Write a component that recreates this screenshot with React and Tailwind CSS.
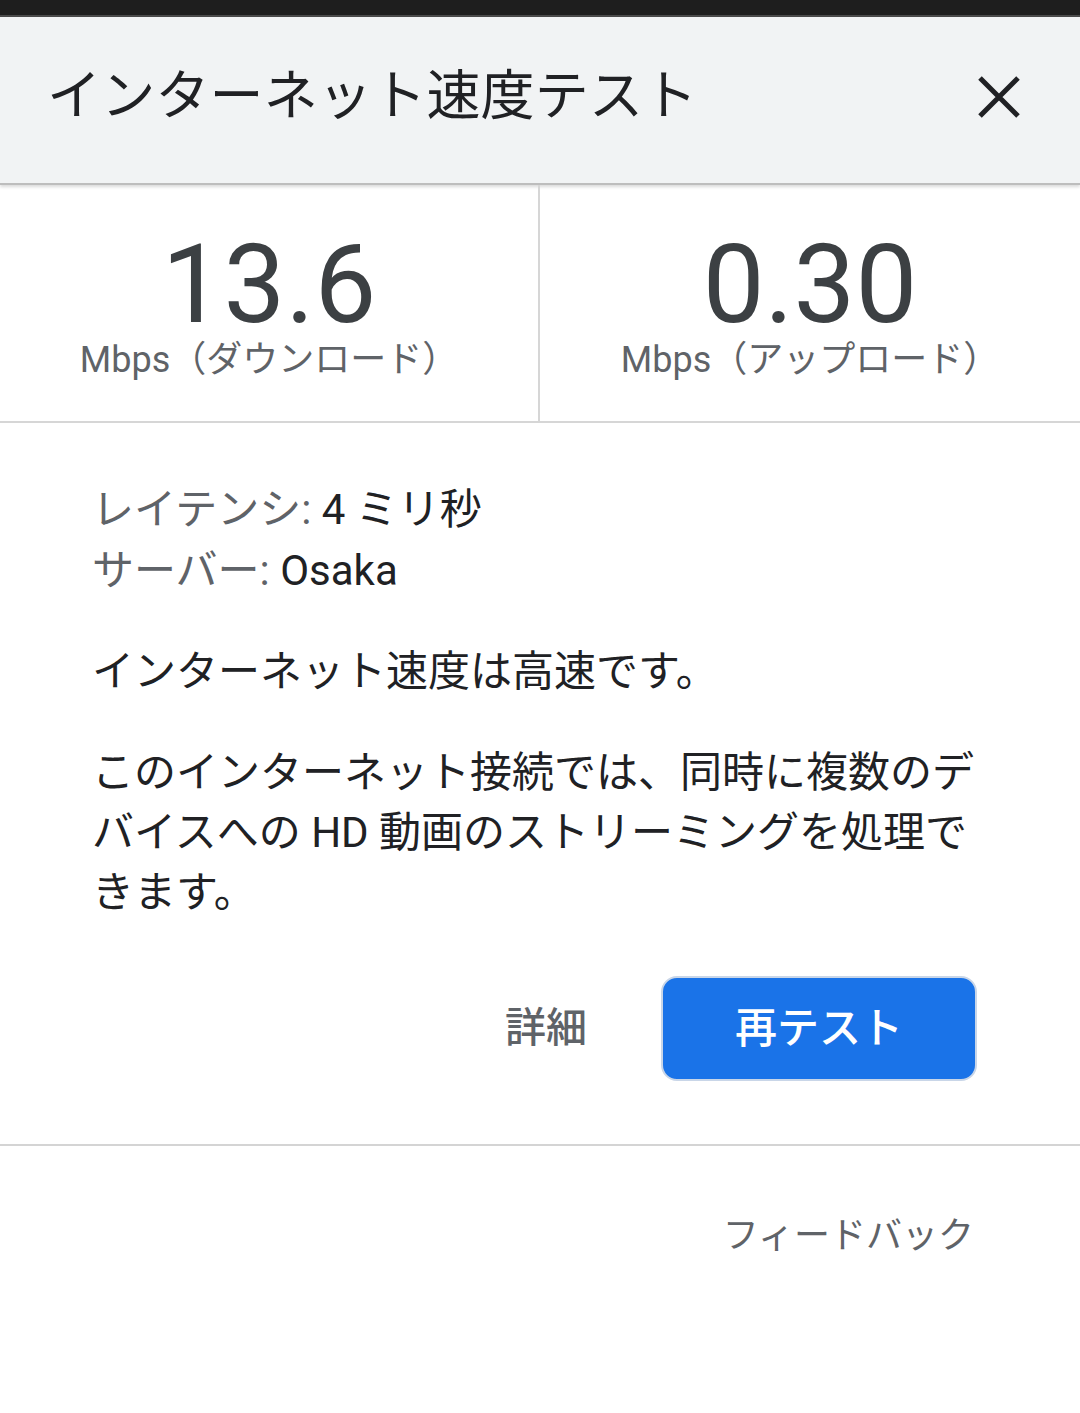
import React from "react";

export default function App() {
  const font = { fontFamily: 'Roboto, "Noto Sans CJK JP", sans-serif' };
  return (
    <div className="w-[1080px] h-[1413px] bg-white flex flex-col" style={font}>
      <div className="h-[15px] bg-[#1e1e1e]" />
      <div className="h-[2px] bg-[#4a4a4a]" />
      <div className="h-[168px] bg-[#f1f3f4] flex items-center justify-between pl-[47px] pr-[59px] border-b-[2px] border-[#bdbdbd] shadow-[0_2px_3px_rgba(0,0,0,0.15)]">
        <div className="text-[54px] leading-none text-[#202124] -mt-[6px] tracking-[0.2px]">インターネット速度テスト</div>
        <svg width="44" height="44" viewBox="0 0 44 44" className="-mt-[6px]">
          <path d="M3 3 L41 41 M41 3 L3 41" stroke="#202124" strokeWidth="5" strokeLinecap="butt" />
        </svg>
      </div>
      <div className="grid grid-cols-2 h-[238px] border-b-[2px] border-[#d6d6d6]">
        <div className="flex flex-col items-center pt-[48px] border-r-[2px] border-[#d6d6d6]">
          <div className="text-[110px] leading-[104px] text-[#3c4043]">13.6</div>
          <div className="text-[36px] leading-[40px] text-[#5f6368] mt-[3px]">Mbps（ダウンロード）</div>
        </div>
        <div className="flex flex-col items-center pt-[48px]">
          <div className="text-[110px] leading-[104px] text-[#3c4043]">0.30</div>
          <div className="text-[36px] leading-[40px] text-[#5f6368] mt-[3px]">Mbps（アップロード）</div>
        </div>
      </div>
      <div className="px-[92px] pt-[56px] text-[42px] text-[#202124]">
        <div className="leading-[61px]">
          <span className="text-[#5f6368]">レイテンシ:</span> 4 ミリ秒
        </div>
        <div className="leading-[61px]">
          <span className="text-[#5f6368]">サーバー:</span> Osaka
        </div>
        <div className="leading-[60px] mt-[41px]">インターネット速度は高速です。</div>
        <div className="leading-[60px] mt-[41px]">
          このインターネット接続では、同時に複数のデバイスへの HD 動画のストリーミングを処理できます。
        </div>
      </div>
      <div className="flex justify-end items-center pr-[103px] mt-[53px] gap-[74px]">
        <div className="text-[41px] font-medium text-[#5f6368]">詳細</div>
        <div className="w-[316px] h-[105px] rounded-[16px] bg-[#1a73e8] border-[2px] border-[#c9d6e8] flex items-center justify-center text-white text-[42px] font-medium">
          再テスト
        </div>
      </div>
      <div className="h-[2px] bg-[#d4d4d4] mt-[63px]" />
      <div className="flex justify-end pr-[106px] pt-[68px]">
        <div className="text-[36px] leading-[44px] text-[#5f6368]">フィードバック</div>
      </div>
    </div>
  );
}
